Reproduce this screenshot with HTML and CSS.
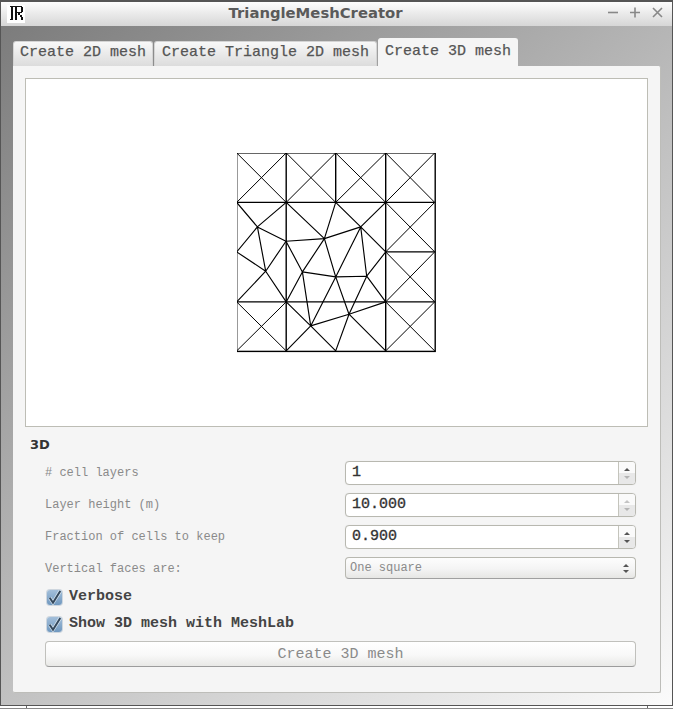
FILE: index.html
```html
<!DOCTYPE html>
<html lang="en">
<head>
<meta charset="utf-8">
<title>TriangleMeshCreator</title>
<link rel="stylesheet" href="styles.css">
</head>
<body>
<div class="window">
  <header class="titlebar">
    <svg class="appicon" width="18" height="18" viewBox="0 0 18 18" shape-rendering="crispEdges">
      <rect width="18" height="18" fill="#fff"/>
      <path d="M3 1h12v1H3zM4 1h2v14H4zM8 1h2v14H8zM14 2h2v5h-2zM10 7h5v1h-5zM11 8h2v2h-2zM13 10h2v2h-2zM14 12h2v3h-2zM3 14h3v1H3z" fill="#111"/>
    </svg>
    <h1 class="title">TriangleMeshCreator</h1>
    <div class="controls">
      <svg width="14" height="14" viewBox="0 0 14 14"><path d="M1 7.5h10" stroke="#888" stroke-width="1.6"/></svg>
      <svg width="14" height="14" viewBox="0 0 14 14"><path d="M1 7.5h10M6 2.5v10" stroke="#888" stroke-width="1.6"/></svg>
      <svg width="14" height="14" viewBox="0 0 14 14"><path d="M2 3l9 9M11 3l-9 9" stroke="#888" stroke-width="1.6"/></svg>
    </div>
  </header>
  <main class="content">
    <nav class="tabs">
      <div class="tab">Create 2D mesh</div>
      <div class="tab mid">Create Triangle 2D mesh</div>
      <div class="tab active">Create 3D mesh</div>
    </nav>
    <section class="panel">
      <div class="canvas">
        <svg class="mesh" width="200" height="200" viewBox="1.3 1.1 200 200">
          <g class="thin">
            <path d="M1 1L50.5 50.5M50.5 1L1 50.5M50.5 1L100 50.5M100 1L50.5 50.5M100 1L150 50.5M150 1L100 50.5M150 1L199 50.5M199 1L150 50.5"/>
            <path d="M150 50.5L199 100M199 50.5L150 100M150 100L199 150M199 100L150 150"/>
            <path d="M1 150L50.5 199M50.5 150L1 199M150 150L199 199M199 150L150 199"/>
          </g>
          <g class="grid">
            <rect x="1" y="1" width="198.5" height="198.5"/>
            <path d="M1 50.5H199M1 150H199M150 100H199"/>
            <path d="M50.5 1V199M100 1V50.5M150 1V199"/>
          </g>
          <g class="lines">
            <path d="M1 50.5L21.7 75M50.5 50.5L21.7 75M21.7 75L50.3 89.3M21.7 75L1 100M21.7 75L30 119.3M1 100L30 119.3M30 119.3L50.3 89.3M30 119.3L50.5 150M30 119.3L1 150"/>
            <path d="M50.5 50.5L88.7 86.7M100 50.5L88.7 86.7M100 50.5L125 75M150 50.5L125 75M50.3 89.3L88.7 86.7M88.7 86.7L125 75"/>
            <path d="M50.3 89.3L66.7 120M88.7 86.7L66.7 120M88.7 86.7L100 125M125 75L100 125M125 75L131 124.3M131 124.3L150 100M125 75L150 100"/>
            <path d="M66.7 120L50.5 150M66.7 120L100 125M100 125L131 124.3M66.7 120L75 174M100 125L75 174M100 125L113.3 162.3M131 124.3L113.3 162.3M131 124.3L150 150"/>
            <path d="M113.3 162.3L150 150M113.3 162.3L75 174M113.3 162.3L100 199M113.3 162.3L150 199M75 174L50.5 150M75 174L50.5 199M75 174L100 199"/>
          </g>
        </svg>
      </div>
      <h2 class="group">3D</h2>
      <div class="form">
        <label class="lbl">#&nbsp;cell layers</label>
        <div class="spin">
          <span class="value">1</span>
          <span class="arrows"><i class="up on"></i><i class="down"></i></span>
        </div>
        <label class="lbl">Layer height (m)</label>
        <div class="spin">
          <span class="value">10.000</span>
          <span class="arrows"><i class="up"></i><i class="down"></i></span>
        </div>
        <label class="lbl">Fraction of cells to keep</label>
        <div class="spin">
          <span class="value">0.900</span>
          <span class="arrows"><i class="up on"></i><i class="down on"></i></span>
        </div>
        <label class="lbl">Vertical faces are:</label>
        <div class="combo">
          <span>One square</span>
          <span class="comboarrows"><i class="up on"></i><i class="down on"></i></span>
        </div>
      </div>
      <div class="check first">
        <svg class="box" width="15" height="15" viewBox="0 0 15 15"><path d="M2.7 7.7L6 12.7L13.3 1" class="tick-halo"/><path d="M2.7 7.7L6 12.7L13.3 1" class="tick"/></svg>
        <span>Verbose</span>
      </div>
      <div class="check">
        <svg class="box" width="15" height="15" viewBox="0 0 15 15"><path d="M2.7 7.7L6 12.7L13.3 1" class="tick-halo"/><path d="M2.7 7.7L6 12.7L13.3 1" class="tick"/></svg>
        <span>Show 3D mesh with MeshLab</span>
      </div>
      <div class="button">Create 3D mesh</div>
    </section>
  </main>
</div>
<div class="strip"><i class="tickmark"></i><i class="tickmark"></i></div>
</body>
</html>
```
FILE: styles.css
```css
* { box-sizing: border-box; }
html, body { margin: 0; height: 709px; overflow: hidden; background: #fff; }
body { font-family: "Liberation Mono", monospace; }

.window {
  width: 673px;
  height: 706px;
  border: 1px solid #555;
  border-top-width: 2px;
  display: flex;
  flex-direction: column;
}

.titlebar {
  height: 24px;
  flex: none;
  display: flex;
  align-items: center;
  position: relative;
  padding-left: 6px;
  background: linear-gradient(#fdfdfd, #d6d6d6);
}
.appicon { display: block; }
.title {
  position: absolute;
  top: 2px;
  left: 0;
  right: 42px;
  margin: 0;
  text-align: center;
  font: bold 14.8px/18px "DejaVu Sans", sans-serif;
  color: #5a5a5a;
}
.controls {
  margin: 0 7px 4px auto;
  display: flex;
  gap: 8px;
}
.controls svg { display: block; }

.content {
  flex: 1;
  padding: 12px 11px 0 12px;
  background: linear-gradient(140deg, #7c7c7c, #fbfbfb);
}

.tabs {
  display: flex;
  align-items: flex-end;
  height: 28px;
  gap: 1px;
}
.tab {
  height: 25px;
  padding: 2px 6px 0;
  font-size: 15px;
  line-height: 18px;
  font-weight: 400;
  -webkit-text-stroke: 0.25px #555;
  color: #555;
  border-radius: 3px 3px 0 0;
  background: linear-gradient(#f8f8f8, #dcdcdc);
  border: 1px solid #d4d4d4;
  border-bottom: 0;
  white-space: nowrap;
}
.tab.mid { padding-left: 7px; padding-right: 7px; }
.tab.active {
  height: 28px;
  padding-top: 4px;
  background: #f5f5f5;
  border-color: #f5f5f5;
}

.panel {
  width: 648px;
  height: 627px;
  padding: 12px 12px 0;
  background: #f5f5f5;
  border-right: 1px solid #bdbdb9;
  border-bottom: 1px solid #bdbdb9;
  border-radius: 0 2px 2px 2px;
}
.canvas {
  width: 623px;
  height: 349px;
  background: #fff;
  border: 1px solid #bdbdb5;
  display: flex;
  align-items: center;
  justify-content: center;
}
.mesh { display: block; }
.lines, .thin, .grid { fill: none; stroke: #000; }
.grid { stroke-width: 1.4; }
.lines { stroke-width: 1.15; }
.thin { stroke-width: 1; }

.group {
  margin: 10px 0 0 5px;
  height: 16px;
  font: bold 13px/16px "DejaVu Sans", sans-serif;
  color: #333;
}

.form {
  margin: 8px 0 0 20px;
  width: 591px;
  display: grid;
  grid-template-columns: 300px 291px;
  grid-auto-rows: 24px;
  row-gap: 8px;
  align-items: center;
}
.lbl {
  font-size: 12px;
  line-height: 14px;
  color: #8a8a8a;
}
.spin {
  height: 24px;
  display: flex;
  background: #fff;
  border: 1px solid #b8b8b0;
  border-radius: 4px;
  overflow: hidden;
  box-shadow: 0 0 1px #ddd;
}
.value {
  flex: 1;
  padding-left: 6px;
  font-size: 15px;
  line-height: 22px;
  -webkit-text-stroke: 0.35px #333;
  color: #333;
  border-right: 1px solid #c4c4bc;
}
.arrows {
  width: 16px;
  flex: none;
  display: flex;
  flex-direction: column;
  align-items: center;
  justify-content: space-between;
  padding: 6px 0 5px;
  background: linear-gradient(#fafafa 50%, #e8e8e8 50%);
}
.up, .down {
  display: block;
  width: 0;
  height: 0;
  border-left: 3px solid transparent;
  border-right: 3px solid transparent;
}
.up { border-bottom: 3px solid #c4c4c4; }
.down { border-top: 3px solid #b4b4b4; }
.up.on { border-bottom-color: #555; }
.down.on { border-top-color: #555; }

.combo {
  height: 22px;
  align-self: start;
  display: flex;
  align-items: center;
  justify-content: space-between;
  padding: 0 6px 0 4px;
  font-size: 12px;
  color: #8a8a8a;
  border: 1px solid #b8b8b0;
  border-bottom-color: #a0a0a0;
  border-radius: 4px;
  background: linear-gradient(#fdfdfd, #f4f4f4 55%, #e6e6e4);
}
.comboarrows {
  display: flex;
  flex-direction: column;
  gap: 3px;
}

.check {
  display: flex;
  align-items: center;
  gap: 7px;
  height: 20px;
  margin: 7px 0 0 22px;
  font-size: 15px;
  font-weight: 700;
  color: #444;
}
.check.first { margin-top: 5px; }
.box {
  display: block;
  flex: none;
  margin-top: 2px;
  overflow: visible;
  border-radius: 3px;
  background: linear-gradient(#a3bfda, #7098bf);
  box-shadow: 0 0 0 1px #ced6de;
}
.tick { fill: none; stroke: #34485c; stroke-width: 2; }
.tick-halo { fill: none; stroke: #eef4f8; stroke-width: 3.4; opacity: .75; }

.button {
  margin: 8px 0 0 20px;
  width: 591px;
  height: 26px;
  text-align: center;
  font-size: 15px;
  line-height: 26px;
  color: #8a8a8a;
  border: 1px solid #c0c0bc;
  border-bottom-color: #9c9c9c;
  border-radius: 4px;
  background: linear-gradient(#ffffff, #f8f8f8 55%, #e8e8e6);
}

.strip {
  height: 3px;
  display: flex;
  border-bottom: 1px solid #888;
  padding-left: 26px;
}
.tickmark {
  display: block;
  width: 1px;
  background: #666;
}
.tickmark + .tickmark { margin-left: 620px; }
```
